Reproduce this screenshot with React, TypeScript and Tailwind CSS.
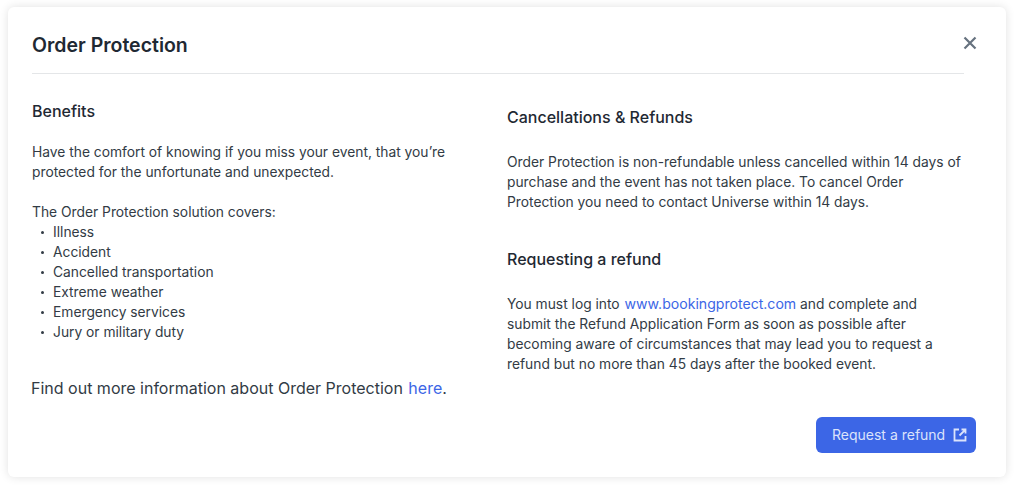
const App = () => {
  return (
    <div className="h-[486px] w-[1014px] bg-white pt-[7px] pl-2 font-['Inter',sans-serif] text-[#1f2933]">
      <div className="relative h-[470px] w-[998px] rounded-[6px] bg-white pt-[22px] pr-[30px] pl-6 shadow-[0_0_10px_rgba(0,0,0,0.12)]">
        <button className="absolute top-[29px] right-[29px] text-[#66727f]">
          <svg width="14" height="14" viewBox="0 0 14 14" fill="none" stroke="currentColor" strokeWidth="2.2">
            <path d="M1.5 1.5l11 11M12.5 1.5l-11 11" />
          </svg>
        </button>
        <div className="mr-[12px] h-[45px] border-b border-[#e4e6e8]">
          <h1 className="text-[19.5px] leading-[32px] font-semibold">Order Protection</h1>
        </div>
        <div className="flex">
          <div className="w-[475px] shrink-0 pt-[27px]">
            <h2 className="text-[16px] leading-5 font-medium">Benefits</h2>
            <p className="mt-[21px] w-[430px] text-[13.8px] leading-5 text-[#323b45]">
              Have the comfort of knowing if you miss your event, that you’re protected for the unfortunate and unexpected.
            </p>
            <p className="mt-5 text-[13.8px] leading-5 text-[#323b45]">The Order Protection solution covers:</p>
            <ul className="text-[13.8px] leading-5 text-[#323b45]">
              {["Illness", "Accident", "Cancelled transportation", "Extreme weather", "Emergency services", "Jury or military duty"].map((item) => (
                <li key={item} className="flex items-center">
                  <span className="mr-[9px] ml-[9px] h-[3px] w-[3px] rounded-full bg-[#323b45]" />
                  {item}
                </li>
              ))}
            </ul>
            <p className="mt-[34px] -ml-px text-[16px] leading-6 text-[#323b45]">
              Find out more information about Order Protection <a className="ml-px text-[#3c66e6]">here</a>.
            </p>
          </div>
          <div className="flex-1 pt-[33px]">
            <h2 className="text-[16px] leading-5 font-medium">Cancellations &amp; Refunds</h2>
            <p className="mt-[25px] max-w-[458px] text-[13.8px] leading-5 text-[#323b45]">
              Order Protection is non-refundable unless cancelled within 14 days of purchase and the event has not taken place. To cancel Order Protection you need to contact Universe within 14 days.
            </p>
            <h2 className="mt-[37px] text-[16px] leading-5 font-medium">Requesting a refund</h2>
            <p className="mt-[25px] max-w-[440px] text-[13.8px] leading-5 text-[#323b45]">
              You must log into <a className="ml-px text-[14.1px] text-[#3c66e6]">www.bookingprotect.com</a> and complete and submit the Refund Application Form as soon as possible after becoming aware of circumstances that may lead you to request a refund but no more than 45 days after the booked event.
            </p>
            <div className="mt-[43px] flex justify-end">
              <button className="flex h-9 w-40 items-center rounded-[6px] bg-[#3c66e6] pb-[2px] pl-4 text-[14px] text-[#dbe3fb]">
                Request a refund
                <svg className="mt-[2px] ml-[8px]" width="14" height="14" viewBox="0 0 14 14" fill="none" stroke="currentColor" strokeWidth="1.8">
                  <path d="M6 1.5H1.5v11h11V8M8.5 1.5h4V5.5M12.2 1.8L6.5 7.5" />
                </svg>
              </button>
            </div>
          </div>
        </div>
      </div>
    </div>
  );
};

export default App;
